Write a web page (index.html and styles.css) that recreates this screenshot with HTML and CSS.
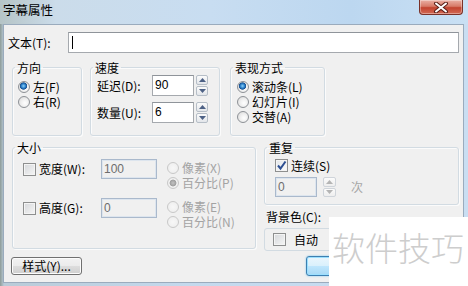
FILE: index.html
```html
<!DOCTYPE html>
<html>
<head>
<meta charset="utf-8">
<link rel="stylesheet" href="styles.css">
</head>
<body>
<div class="window">
  <div class="titlebar">
    <span class="title">字幕属性</span>
    <div class="close">
      <svg width="16" height="11" viewBox="0 0 16 11"><path d="M3 1.5 L13 9.5 M13 1.5 L3 9.5" stroke="#5a1f18" stroke-width="4" stroke-linecap="round"/><path d="M3 1.5 L13 9.5 M13 1.5 L3 9.5" stroke="#ffffff" stroke-width="2" stroke-linecap="round"/></svg>
    </div>
  </div>
  <div class="client">
    <div class="text-row">
      <span class="text-label">文本(T):</span>
      <div class="edit wide"><span class="caret"></span></div>
    </div>

    <div class="row1">
      <fieldset class="grp g-dir">
        <legend>方向</legend>
        <div class="body b-dir">
          <div class="opt"><span class="radio on"></span>左(F)</div>
          <div class="opt"><span class="radio"></span>右(R)</div>
        </div>
      </fieldset>
      <fieldset class="grp g-speed">
        <legend>速度</legend>
        <div class="body b-speed">
          <div class="spin-row">
            <span class="lbl">延迟(D):</span>
            <div class="edit num">90</div>
            <div class="spin"><span class="sb"><svg width="7" height="4" viewBox="0 0 7 4"><path d="M0 4 L3.5 0 L7 4 Z" fill="#4d6185"/></svg></span><span class="sb"><svg width="7" height="4" viewBox="0 0 7 4"><path d="M0 0 L3.5 4 L7 0 Z" fill="#4d6185"/></svg></span></div>
          </div>
          <div class="spin-row">
            <span class="lbl">数量(U):</span>
            <div class="edit num">6</div>
            <div class="spin"><span class="sb"><svg width="7" height="4" viewBox="0 0 7 4"><path d="M0 4 L3.5 0 L7 4 Z" fill="#4d6185"/></svg></span><span class="sb"><svg width="7" height="4" viewBox="0 0 7 4"><path d="M0 0 L3.5 4 L7 0 Z" fill="#4d6185"/></svg></span></div>
          </div>
        </div>
      </fieldset>
      <fieldset class="grp g-mode">
        <legend>表现方式</legend>
        <div class="body b-mode">
          <div class="opt"><span class="radio on"></span>滚动条(L)</div>
          <div class="opt"><span class="radio"></span>幻灯片(I)</div>
          <div class="opt"><span class="radio"></span>交替(A)</div>
        </div>
      </fieldset>
    </div>

    <div class="row2">
      <fieldset class="grp g-size">
        <legend>大小</legend>
        <div class="body b-size">
          <div class="size-row">
            <div class="cbl"><span class="check"></span>宽度(W):</div>
            <div class="edit dis sz">100</div>
            <div class="radios">
              <div class="opt dim"><span class="radio off"></span>像素(X)</div>
              <div class="opt dim"><span class="radio off on-dis"></span>百分比(P)</div>
            </div>
          </div>
          <div class="size-row">
            <div class="cbl"><span class="check"></span>高度(G):</div>
            <div class="edit dis sz">0</div>
            <div class="radios">
              <div class="opt dim"><span class="radio off"></span>像素(E)</div>
              <div class="opt dim"><span class="radio off"></span>百分比(N)</div>
            </div>
          </div>
        </div>
      </fieldset>
      <div class="rightcol">
        <fieldset class="grp g-repeat">
          <legend>重复</legend>
          <div class="body b-repeat">
            <div class="cbl short"><span class="check checked"><svg width="11" height="11" viewBox="0 0 11 11"><path d="M2 5.5 L4.5 8.5 L9.5 1.5" stroke="#2d4f92" stroke-width="2" fill="none"/></svg></span>连续(S)</div>
            <div class="rep-row">
              <div class="edit dis rep">0</div>
              <div class="spin dspin"><span class="sb"><svg width="7" height="4" viewBox="0 0 7 4"><path d="M0 4 L3.5 0 L7 4 Z" fill="#b4b4b4"/></svg></span><span class="sb"><svg width="7" height="4" viewBox="0 0 7 4"><path d="M0 0 L3.5 4 L7 0 Z" fill="#b4b4b4"/></svg></span></div>
              <span class="times">次</span>
            </div>
          </div>
        </fieldset>
        <div class="bg-label">背景色(C):</div>
        <div class="auto-box"><span class="check"></span>自动</div>
      </div>
    </div>

    <div class="row3">
      <button class="btn">样式(Y)...</button>
      <button class="btn default" aria-label="确定"></button>
    </div>
  </div>
  <div class="watermark">软件技巧</div>
</div>
</body>
</html>
```

FILE: styles.css
```css
* { box-sizing: border-box; }
body { margin: 0; }

.window {
  position: relative;
  width: 468px;
  height: 286px;
  overflow: hidden;
  background: linear-gradient(90deg, #8e9c98 0px, #b9cbd8 4px, #c4d9ed 40%, #c9def2 100%);
  font-family: "Noto Sans CJK SC", sans-serif;
  font-size: 12px;
  line-height: 14px;
  color: #000;
}

.titlebar {
  height: 24px;
  display: flex;
  justify-content: space-between;
  align-items: flex-start;
  background: linear-gradient(90deg, #b5c4c6 0%, #cbdcea 12%, #c8ddf1 45%, #bcd7f0 75%, #c9e0f4 100%);
}
.title {
  padding-left: 3px;
  line-height: 20px;
  font-size: 12.5px;
}
.close {
  width: 44px;
  height: 15px;
  margin-right: 5px;
  border: 1px solid #7a3128;
  border-top: none;
  border-radius: 0 0 4px 4px;
  background: linear-gradient(#eab0a4 0%, #d77a68 45%, #c2432f 55%, #d36a55 100%);
  display: flex;
  align-items: center;
  justify-content: center;
  box-shadow: inset 0 0 0 1px rgba(255,255,255,0.35);
}

.client {
  margin: 0 4px 0 3px;
  height: 259px;
  background: #f0f0f0;
  border: 1px solid #9aabbd;
}

.text-row {
  display: flex;
  margin-top: 7px;
  padding-left: 4px;
}
.text-label {
  width: 60px;
  line-height: 21px;
}
.edit {
  background: #fff;
  border: 1px solid #a5a9ae;
  border-top-color: #8f949a;
  font-family: "Liberation Sans", sans-serif;
  font-size: 12px;
  padding-left: 2px;
}
.wide {
  width: 391px;
  height: 21px;
  position: relative;
}
.caret {
  display: block;
  width: 1px;
  height: 13px;
  background: #000;
  margin: 3px 0 0 1px;
}

.row1 {
  display: flex;
  margin-top: 8px;
  padding-left: 8px;
}
.grp {
  margin: 0;
  padding: 0;
  border: 1px solid #d2dbe2;
  border-radius: 3px;
  box-shadow: inset 1px 1px 0 #fbfbfb, 1px 1px 0 #fbfbfb;
  min-width: 0;
}
.grp legend {
  padding: 0 2px;
  margin-left: 2px;
  font-size: 12px;
  line-height: 13px;
}
.g-dir { width: 70px; height: 75px; margin-right: 8px; }
.g-speed { width: 130px; height: 75px; margin-right: 10px; }
.g-mode { width: 95px; height: 75px; }

.b-dir { padding: 5px 0 0 5px; }
.b-mode { padding: 5px 0 0 6px; }
.b-speed { padding: 1px 0 0 6px; }

.opt {
  display: flex;
  align-items: center;
  height: 15px;
  line-height: 15px;
  gap: 3px;
  white-space: nowrap;
}
.opt.dim { color: #a3a3a3; }

.radio {
  width: 12px;
  height: 12px;
  border-radius: 50%;
  border: 1px solid #8d9196;
  background: radial-gradient(circle at 60% 60%, #ffffff 0%, #f1f1f1 40%, #d6d6d6 100%);
  flex: none;
}
.radio.on {
  background:
    radial-gradient(circle at 45% 40%, #8fd0f7 0, #2f86cf 2px, #154f91 3.3px, rgba(0,0,0,0) 4px),
    radial-gradient(circle at 60% 60%, #ffffff 0%, #f1f1f1 40%, #d6d6d6 100%);
}
.radio.off {
  border-color: #c8c8c8;
  background: radial-gradient(circle, #f7f7f7 0%, #ececec 100%);
}
.radio.on-dis {
  background:
    radial-gradient(circle, #c2c2c2 0, #9f9f9f 3px, rgba(0,0,0,0) 3.8px),
    radial-gradient(circle, #f7f7f7 0%, #ececec 100%);
}

.spin-row {
  display: flex;
  align-items: center;
  height: 21px;
  margin-bottom: 6px;
}
.lbl { width: 55px; white-space: nowrap; }
.num {
  width: 42px;
  height: 21px;
  line-height: 19px;
}
.spin {
  display: flex;
  flex-direction: column;
  gap: 1px;
  margin-left: 2px;
  width: 12px;
  height: 21px;
}
.sb {
  flex: 1;
  display: flex;
  align-items: center;
  justify-content: center;
  border: 1px solid #b6bec7;
  border-radius: 2px;
  background: linear-gradient(#fbfbfb, #e3e6ea);
}

.row2 {
  display: flex;
  align-items: flex-start;
  margin-top: 5px;
  padding-left: 8px;
}
.g-size { width: 244px; height: 108px; }
.b-size { padding: 5px 0 0 10px; }
.size-row {
  display: flex;
  align-items: flex-start;
  height: 30px;
  margin-bottom: 9px;
}
.cbl {
  display: flex;
  align-items: center;
  gap: 3px;
  width: 78px;
  height: 20px;
  line-height: 20px;
  white-space: nowrap;
}
.cbl.short { height: 15px; line-height: 15px; }
.check {
  width: 13px;
  height: 13px;
  border: 1px solid #8e8f8f;
  background: linear-gradient(135deg, #d5d7da 0%, #f6f6f6 100%);
  box-shadow: inset 0 0 0 1px #f4f4f4;
  flex: none;
  display: flex;
  align-items: center;
  justify-content: center;
}
.check.checked { background: linear-gradient(135deg, #e2e6ea 0%, #fbfbfb 100%); }
.dis {
  background: #f0f0f0;
  border: 1px solid #aab9cc;
  box-shadow: inset 0 0 0 1px #dde5ee;
  color: #6d6d6d;
  line-height: 18px;
}
.sz { width: 56px; height: 20px; }
.radios { margin-left: 10px; padding-top: 1px; }

.rightcol {
  width: 195px;
  margin-left: 8px;
}
.g-repeat { width: 195px; height: 64px; }
.b-repeat { padding: 4px 0 0 10px; }
.rep-row {
  display: flex;
  align-items: center;
  margin-top: 4px;
  height: 20px;
}
.rep { width: 42px; height: 20px; }
.dspin { margin-left: 6px; width: 13px; height: 20px; }
.dspin .sb { border-color: #cfd4da; background: linear-gradient(#fbfbfb, #eeeeee); }
.times { margin-left: 15px; color: #a6a6a6; line-height: 20px; }

.bg-label {
  margin-top: 5px;
  line-height: 14px;
  padding-left: 2px;
}
.auto-box {
  margin-top: 4px;
  height: 23px;
  line-height: 21px;
  border: 1px solid #d2dbe2;
  border-radius: 3px;
  display: flex;
  align-items: center;
  gap: 8px;
  padding-left: 8px;
}

.row3 {
  display: flex;
  align-items: center;
  height: 20px;
  margin-top: 5px;
  padding-left: 7px;
}
.btn {
  font-family: "Noto Sans CJK SC", sans-serif;
  font-size: 12px;
  padding: 0;
  width: 71px;
  height: 18px;
  line-height: 16px;
  border: 1px solid #707070;
  border-radius: 3px;
  background: linear-gradient(#f2f2f2 0%, #ebebeb 50%, #dddddd 51%, #cfcfcf 100%);
  box-shadow: inset 0 0 0 1px #fcfcfc;
  color: #000;
}
.btn.default {
  margin-left: 224px;
  width: 75px;
  height: 20px;
  border-color: #3c7fb1;
  background: linear-gradient(#eaf6fd 0%, #d9f0fc 50%, #bee6fd 51%, #a7d9f5 100%);
  box-shadow: inset 0 0 0 1px #9be0ff, 0 0 2px #6ec3ef;
}

.watermark {
  position: absolute;
  left: 329px;
  top: 217px;
  width: 139px;
  height: 69px;
  background: #fff;
  color: #cdcdcd;
  font-size: 33px;
  line-height: 33px;
  padding: 14px 0 0 3px;
  white-space: nowrap;
  font-weight: 300;
}
```
